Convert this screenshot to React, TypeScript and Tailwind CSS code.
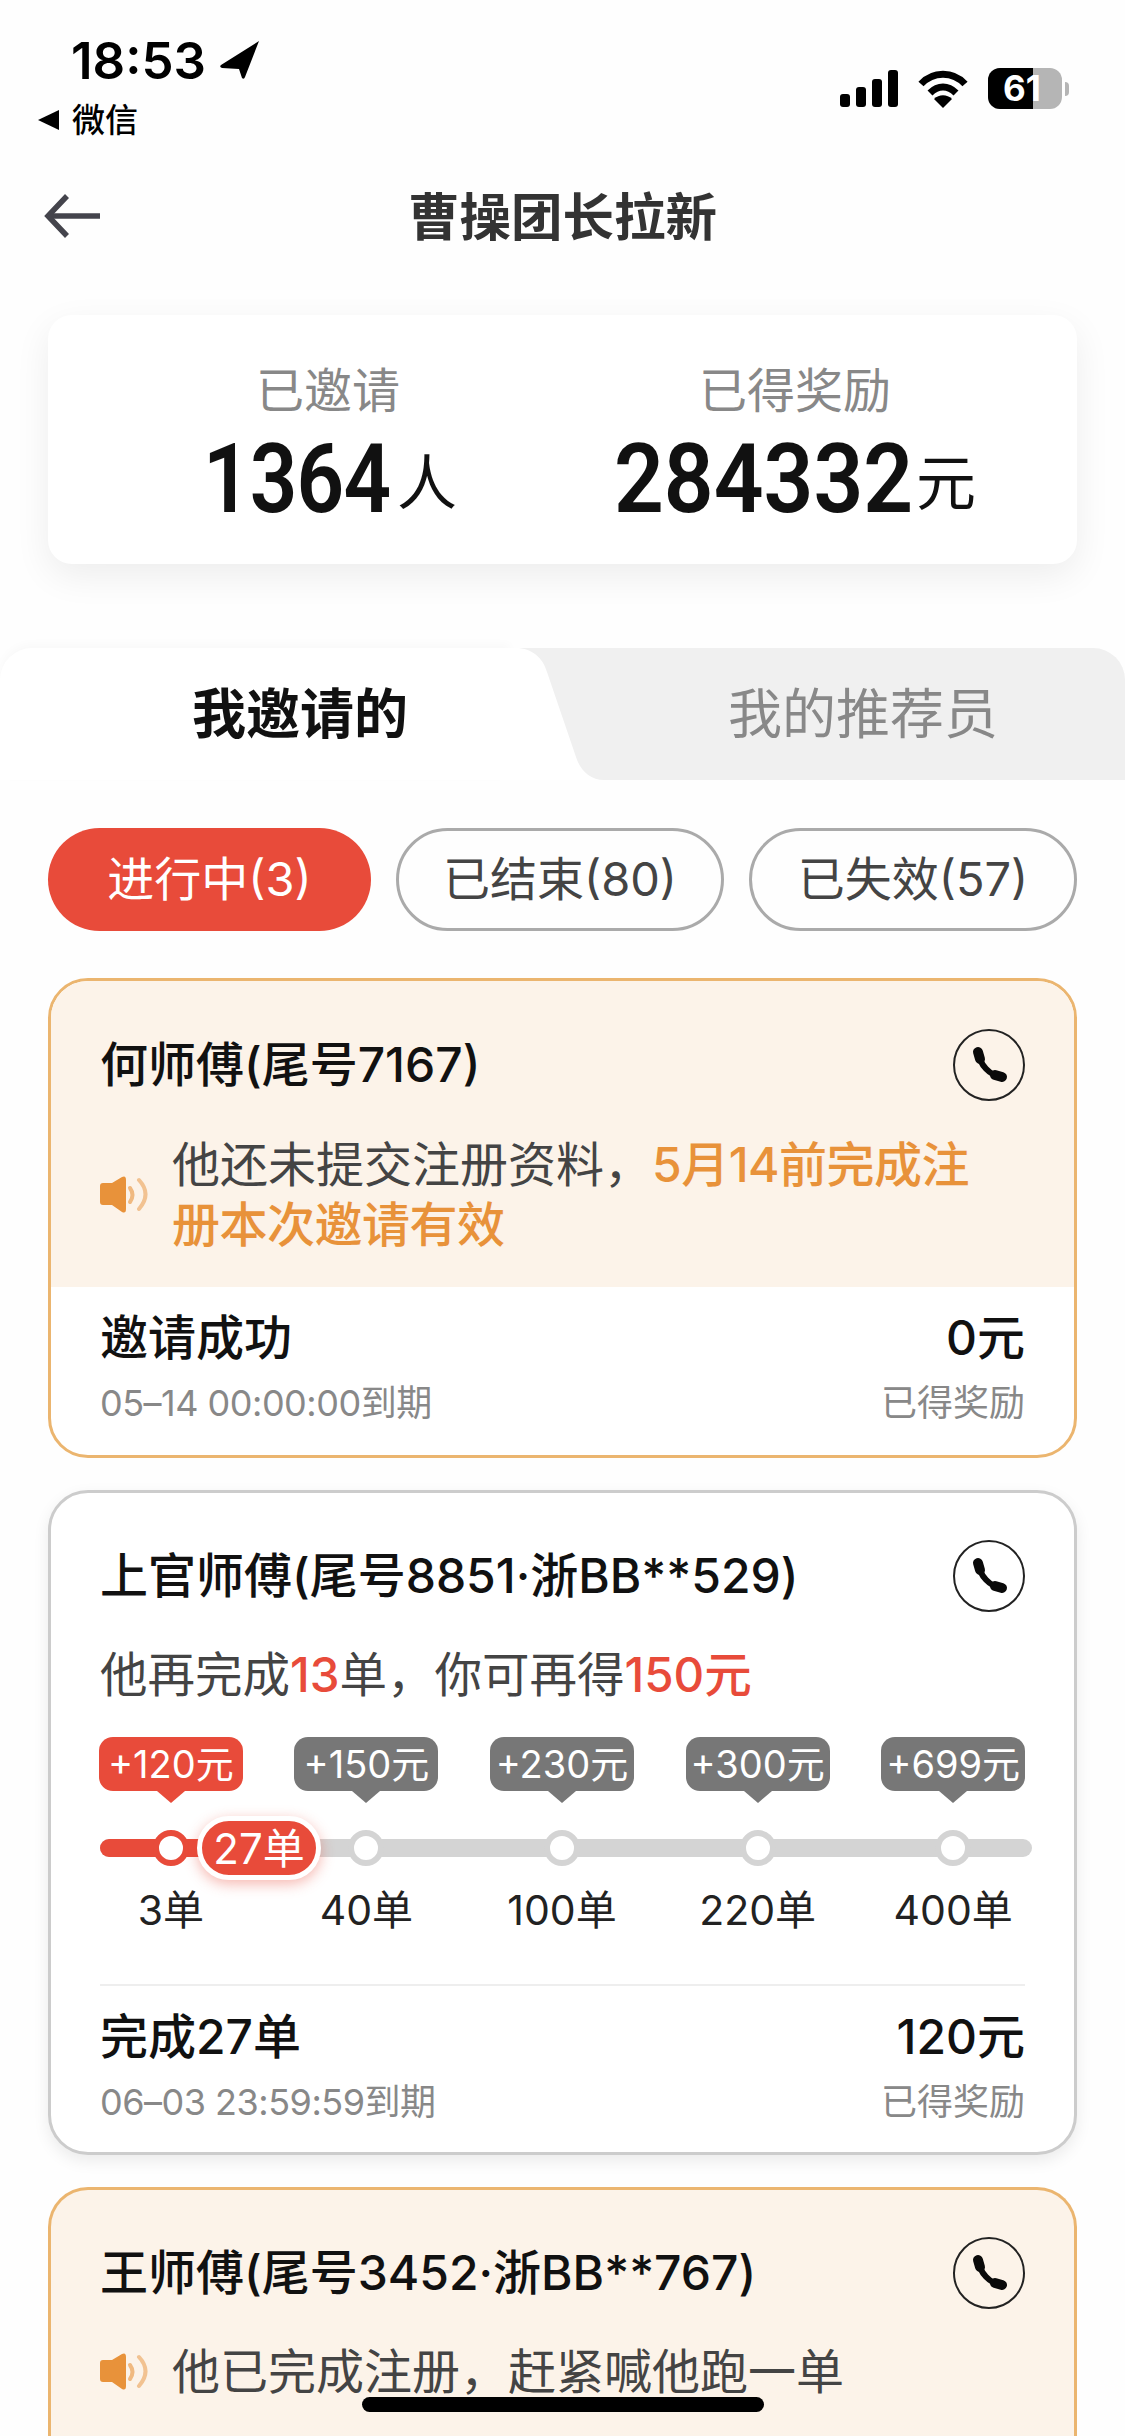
const RED = '#e84b3a';
const ORANGE = '#e8923a';

const steps = [
  { bonus: '+120元', count: '3单', done: true },
  { bonus: '+150元', count: '40单', done: false },
  { bonus: '+230元', count: '100单', done: false },
  { bonus: '+300元', count: '220单', done: false },
  { bonus: '+699元', count: '400单', done: false },
];

function StatusBar() {
  return (
    <div className="flex h-[156px] justify-between">
      <div className="pt-[37px]">
        <div className="flex items-center pl-[71px]">
          <span className="text-[51px] leading-[48px] font-semibold text-black">18:53</span>
          <svg viewBox="0 0 40 40" className="mt-[-2px] ml-[14px] h-[40px] w-[40px]">
            <path d="M39 1 L1 25 Q-1 27 2 28 L19 29 L22 38 Q24 40 25 37 Z" fill="#000" />
          </svg>
        </div>
        <div className="mt-[15px] flex items-center pl-[38px]">
          <svg viewBox="0 0 22 20" className="h-[20px] w-[22px]">
            <path d="M21 0 V20 L0 10 Z" fill="#000" />
          </svg>
          <span className="ml-[12px] text-[33px] leading-[40px] font-medium text-black">微信</span>
        </div>
      </div>
      <div className="flex items-start gap-[20px] pt-[68px] pr-[56px]">
        <div className="mt-[2px] flex h-[37px] items-end gap-[6px]">
          <div className="h-[13px] w-[10px] rounded-[3px] bg-black" />
          <div className="h-[20px] w-[10px] rounded-[3px] bg-black" />
          <div className="h-[28px] w-[10px] rounded-[3px] bg-black" />
          <div className="h-[37px] w-[10px] rounded-[3px] bg-black" />
        </div>
        <svg viewBox="0 0 50 38" className="mt-[2px] h-[38px] w-[50px]" fill="none" stroke="#000" strokeWidth="7">
          <path d="M3 14 C15 1 35 1 47 14" />
          <path d="M12 23 C20 15 30 15 38 23" />
          <path d="M25 38 L16 29 C21 24 29 24 34 29 Z" fill="#000" stroke="none" />
        </svg>
        <div className="flex items-center">
          <div className="relative flex h-[41px] w-[74px] overflow-hidden rounded-[12px] bg-[#b5b5b5]">
            <div className="h-full w-[45px] bg-black" />
            <span className="absolute inset-0 pr-[6px] text-center text-[35px] leading-[41px] font-bold text-white">61</span>
          </div>
          <div className="ml-[3px] h-[14px] w-[4px] rounded-r-full bg-[#b5b5b5]" />
        </div>
      </div>
    </div>
  );
}

function NavBar() {
  return (
    <div className="relative flex h-[120px] items-center justify-center">
      <svg viewBox="0 0 56 44" className="absolute top-[38px] left-[44px] h-[44px] w-[56px]" fill="none" stroke="#44444c" strokeWidth="5.5">
        <path d="M56 22 H4" />
        <path d="M23 2 L4 22 L23 42" />
      </svg>
      <h1 className="mt-[2px] text-[51.5px] leading-[60px] font-semibold text-[#333]">曹操团长拉新</h1>
    </div>
  );
}

function StatCard() {
  return (
    <div className="mx-[48px] mt-[39px] flex h-[249px] gap-[161px] rounded-[24px] bg-white pt-[47px] pl-[155px] shadow-[0_12px_36px_rgba(0,0,0,0.07)]">
      <div className="flex w-[250px] flex-col items-center">
        <div className="text-[48px] leading-[58px] text-[#888]">已邀请</div>
        <div className="mt-[17px] flex h-[84px] w-full items-end">
          <span className="w-[190px] origin-left scale-x-[0.86] font-['Roboto',sans-serif] text-[97px] leading-[84px] font-semibold tracking-[-1px] text-[#111]">1364</span>
          <span className="ml-[4px] text-[60px] leading-[76px] text-[#111]">人</span>
        </div>
      </div>
      <div className="flex w-[362px] flex-col items-center">
        <div className="text-[48px] leading-[58px] text-[#888]">已得奖励</div>
        <div className="mt-[17px] flex h-[84px] w-full items-end">
          <span className="w-[300px] origin-left scale-x-[0.9] font-['Roboto',sans-serif] text-[97px] leading-[84px] font-semibold text-[#111]">284332</span>
          <span className="ml-[2px] text-[60px] leading-[76px] text-[#111]">元</span>
        </div>
      </div>
    </div>
  );
}

function Tabs() {
  return (
    <div className="relative mt-[84px] flex h-[132px]">
      <div className="flex w-[510px] items-center justify-center rounded-tl-[32px] bg-white pl-[90px] text-[54px] font-semibold text-[#111] shadow-[0_-4px_10px_rgba(0,0,0,0.025)]">
        我邀请的
      </div>
      <div className="flex flex-1 items-center justify-center rounded-tr-[32px] bg-[#f0f0f0] pl-[91px] text-[54px] text-[#888]">
        我的推荐员
      </div>
      <svg viewBox="0 0 110 132" className="absolute top-0 left-[500px] h-[132px] w-[110px]">
        <path d="M0 0 H16 C32 0 43 10 47 24 L76 109 C80 122 90 132 104 132 H0 Z" fill="#fff" />
      </svg>
    </div>
  );
}

function Pills() {
  return (
    <div className="mx-[48px] mt-[48px] flex h-[103px] gap-[25px]">
      <div className="flex w-[323px] items-center justify-center rounded-full bg-[#e84b3a] text-[47px] whitespace-nowrap text-white">进行中(3)</div>
      <div className="flex w-[328px] items-center justify-center rounded-full border-[3px] border-[#aaa] text-[47px] whitespace-nowrap text-[#444]">已结束(80)</div>
      <div className="flex w-[328px] items-center justify-center rounded-full border-[3px] border-[#aaa] text-[47px] whitespace-nowrap text-[#444]">已失效(57)</div>
    </div>
  );
}

function PhoneButton() {
  return (
    <div className="h-[72px] w-[72px] shrink-0 rounded-full border-[2px] border-[#222]">
      <svg viewBox="0 0 68 68" className="h-[68px] w-[68px]" fill="none" stroke="#0a0a0a" strokeLinecap="round">
        <path d="M24 22 C24 33 35 45 47 46" strokeWidth="6" />
        <path d="M23 21 L25 28" strokeWidth="10" />
        <path d="M40 44 L47 46" strokeWidth="10" />
      </svg>
    </div>
  );
}

function Speaker() {
  return (
    <svg viewBox="0 0 48 38" className="h-[38px] w-[48px] shrink-0">
      <path d="M3 7 H12 L22 1 Q26 -1 26 4 V33 Q26 38 22 36 L12 29 H3 Q0 29 0 26 V10 Q0 7 3 7 Z" fill={ORANGE} />
      <path d="M30 12 Q35 19 30 26" fill="none" stroke={ORANGE} strokeOpacity="0.6" strokeWidth="4" strokeLinecap="round" />
      <path d="M39 4 Q52 18 39 33" fill="none" stroke={ORANGE} strokeOpacity="0.5" strokeWidth="4" strokeLinecap="round" />
    </svg>
  );
}

function CardHead({ name }: { name: string }) {
  return (
    <div className="flex h-[72px] items-center justify-between">
      <div className="text-[48px] leading-[60px] font-medium whitespace-nowrap text-[#111]">{name}</div>
      <PhoneButton />
    </div>
  );
}

function CardFoot({ status, due, reward }: { status: string; due: string; reward: string }) {
  return (
    <div className="flex justify-between">
      <div>
        <div className="text-[48px] leading-[60px] font-medium text-[#111]">{status}</div>
        <div className="mt-[10px] text-[36px] leading-[50px] tracking-[-0.5px] text-[#888]">{due}</div>
      </div>
      <div className="text-right">
        <div className="text-[48px] leading-[60px] font-medium text-[#111]">{reward}</div>
        <div className="mt-[10px] text-[36px] leading-[50px] text-[#888]">已得奖励</div>
      </div>
    </div>
  );
}

function Progress() {
  return (
    <div className="relative mt-[32px]">
      <div className="absolute top-[102px] left-0 flex h-[18px] w-[932px] overflow-hidden rounded-full bg-[#d4d4d4]">
        <div className="h-full w-[150px] bg-[#e84b3a]" />
      </div>
      <div className="relative ml-[-27px] grid w-[978px] grid-cols-5">
        {steps.map(step => (
          <div key={step.count} className="flex flex-col items-center">
            <div className={`flex h-[54px] w-[144px] items-center justify-center rounded-[14px] text-[38px] whitespace-nowrap text-white ${step.done ? 'bg-[#e84b3a]' : 'bg-[#777]'}`}>
              {step.bonus}
            </div>
            <svg viewBox="0 0 28 12" className="h-[12px] w-[28px]">
              <path d="M0 0 H28 L14 12 Z" fill={step.done ? RED : '#777'} />
            </svg>
            <div className={`mt-[27px] h-[36px] w-[36px] rounded-full border-[6px] bg-white ${step.done ? 'border-[#e84b3a]' : 'border-[#d4d4d4]'}`} />
            <div className="mt-[19px] text-[41px] leading-[50px] text-[#222]">{step.count}</div>
          </div>
        ))}
      </div>
      <div className="absolute top-[79px] left-[97px] flex h-[64px] w-[124px] items-center justify-center rounded-full border-[5px] border-white bg-[#e84b3a] text-[42px] text-white shadow-[0_4px_14px_rgba(232,75,58,0.4)]">
        27单
      </div>
    </div>
  );
}

export default function App() {
  return (
    <div className="relative h-[2436px] w-[1125px] overflow-hidden bg-[#fefefe] font-['Inter','Noto_Sans_CJK_SC',sans-serif]">
      <StatusBar />
      <NavBar />
      <StatCard />
      <Tabs />
      <Pills />

      <div className="mx-[48px] mt-[47px] overflow-hidden rounded-[40px] border-[3px] border-[#ebb56f] bg-white">
        <div className="bg-[#fcf3e9] px-[49px] pt-[48px] pb-[32px]">
          <CardHead name="何师傅(尾号7167)" />
          <div className="mt-[34px] flex items-center gap-[24px]">
            <Speaker />
            <div className="text-[48px] leading-[60px] text-[#444]">
              他还未提交注册资料，
              <span className="font-medium tracking-[-0.5px] text-[#e8923a]">
                5月14前完成注
                <br />
                册本次邀请有效
              </span>
            </div>
          </div>
        </div>
        <div className="px-[49px] pt-[21px] pb-[27px]">
          <CardFoot status="邀请成功" due="05–14 00:00:00到期" reward="0元" />
        </div>
      </div>

      <div className="mx-[48px] mt-[32px] rounded-[40px] border-[3px] border-[#ccc] bg-white px-[49px] pt-[47px] pb-[25px] shadow-[0_6px_16px_rgba(0,0,0,0.08)]">
        <CardHead name="上官师傅(尾号8851·浙BB**529)" />
        <div className="mt-[33px] text-[47.5px] leading-[60px] text-[#444]">
          他再完成<span className="font-medium text-[#e84b3a]">13</span>单，你可再得<span className="font-medium text-[#e84b3a]">150元</span>
        </div>
        <Progress />
        <div className="mt-[49px] border-t-[2px] border-[#eee] pt-[21px]">
          <CardFoot status="完成27单" due="06–03 23:59:59到期" reward="120元" />
        </div>
      </div>

      <div className="mx-[48px] mt-[32px] overflow-hidden rounded-t-[40px] border-[3px] border-b-0 border-[#ebb56f] bg-[#fcf3e9] px-[49px] pt-[47px] pb-[80px]">
        <CardHead name="王师傅(尾号3452·浙BB**767)" />
        <div className="mt-[33px] flex items-center gap-[24px]">
          <Speaker />
          <div className="text-[48px] leading-[60px] text-[#444]">他已完成注册，赶紧喊他跑一单</div>
        </div>
      </div>

      <div className="absolute top-[2397px] left-[362px] h-[15px] w-[402px] rounded-full bg-black" />
    </div>
  );
}
